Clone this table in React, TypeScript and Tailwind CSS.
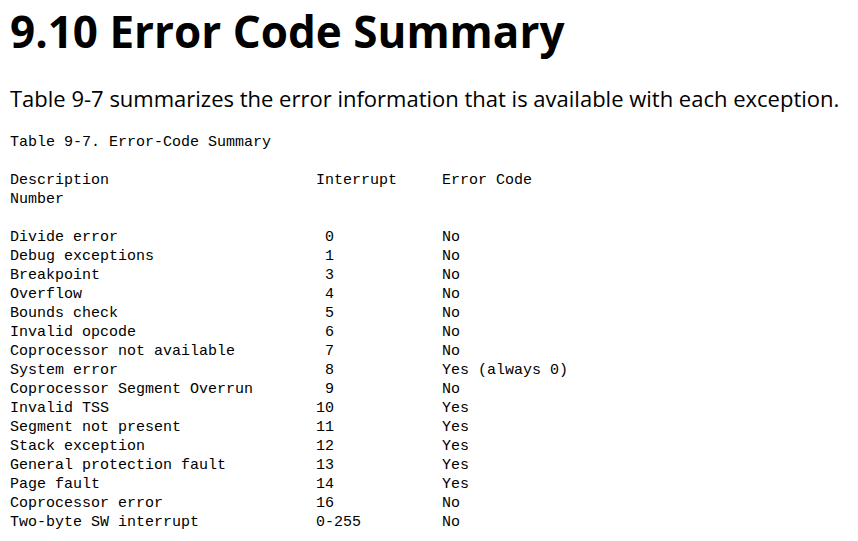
import React from 'react'

const rows: [string, string, string][] = [
  ['Divide error', ' 0', 'No'],
  ['Debug exceptions', ' 1', 'No'],
  ['Breakpoint', ' 3', 'No'],
  ['Overflow', ' 4', 'No'],
  ['Bounds check', ' 5', 'No'],
  ['Invalid opcode', ' 6', 'No'],
  ['Coprocessor not available', ' 7', 'No'],
  ['System error', ' 8', 'Yes (always 0)'],
  ['Coprocessor Segment Overrun', ' 9', 'No'],
  ['Invalid TSS', '10', 'Yes'],
  ['Segment not present', '11', 'Yes'],
  ['Stack exception', '12', 'Yes'],
  ['General protection fault', '13', 'Yes'],
  ['Page fault', '14', 'Yes'],
  ['Coprocessor error', '16', 'No'],
  ['Two-byte SW interrupt', '0-255', 'No'],
]

const line = (a: string, b: string, c: string) => a.padEnd(34) + b.padEnd(14) + c

const table = [
  'Table 9-7. Error-Code Summary',
  '',
  line('Description', 'Interrupt', 'Error Code'),
  'Number',
  '',
  ...rows.map(([a, b, c]) => line(a, b, c)),
].join('\n')

export default function App() {
  return (
    <div className="min-h-[541px] bg-white px-[10px] text-black" style={{ fontFamily: '"Open Sans", sans-serif' }}>
      {/* Heading */}
      <h1 className="pt-[3px] text-[44px] font-bold leading-[56px]">9.10 Error Code Summary</h1>

      {/* Intro */}
      <p className="mt-[24px] text-[22px] leading-[30px]">
        Table 9-7 summarizes the error information that is available with each exception.
      </p>

      {/* Table */}
      <pre
        className="mt-[20px] text-[15px] leading-[19px]"
        style={{ fontFamily: '"Liberation Mono", monospace' }}
      >
        {table}
      </pre>
    </div>
  )
}
